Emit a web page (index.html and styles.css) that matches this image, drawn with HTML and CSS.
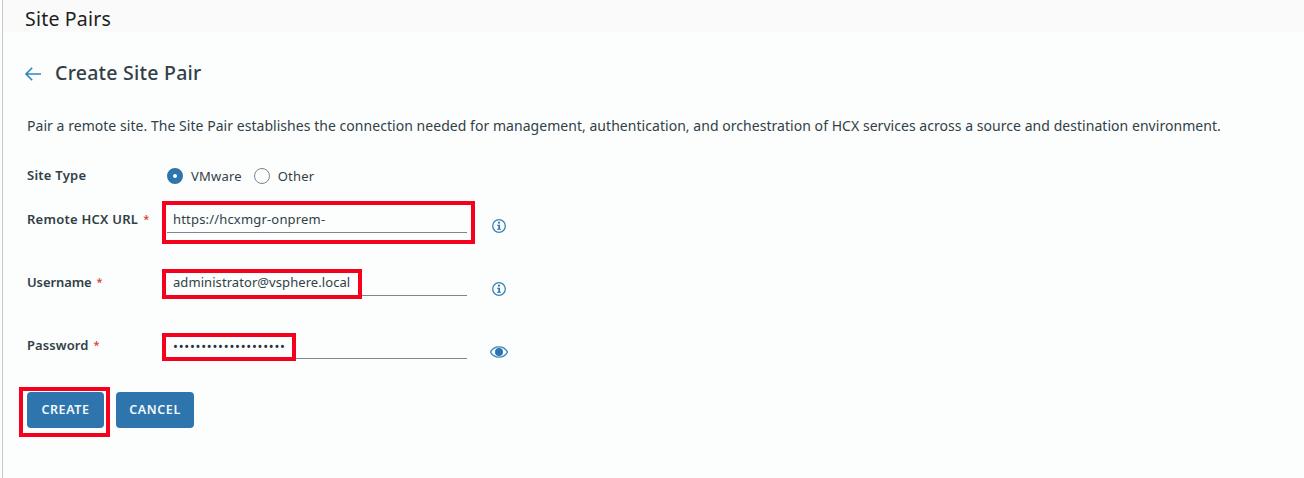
FILE: index.html
```html
<!DOCTYPE html>
<html lang="en">
<head>
<meta charset="utf-8">
<title>Site Pairs</title>
<link rel="stylesheet" href="styles.css">
</head>
<body>
<div class="page">
  <header class="topbar"><span class="topbar-title">Site Pairs</span></header>
  <main class="content">
    <div class="heading">
      <svg class="back" viewBox="0 0 18 16" width="18" height="16"><path d="M8.2 1.8 2 8l6.2 6.2M2 8h15"/></svg>
      <h1>Create Site Pair</h1>
    </div>
    <p class="intro">Pair a remote site. The Site Pair establishes the connection needed for management, authentication, and orchestration of HCX services across a source and destination environment.</p>
    <div class="type-row">
      <div class="label"><span class="l-type">Site Type</span></div>
      <span class="radio checked"></span><span class="radio-text t-vm">VMware</span>
      <span class="radio"></span><span class="radio-text t-other">Other</span>
    </div>
    <div class="row">
      <div class="label"><span class="l-url">Remote HCX URL</span><span class="req">*</span></div>
      <div class="field"><span class="v-url">https://hcxmgr-onprem-</span><i class="mark mark-url"></i></div>
      <svg class="icon" viewBox="0 0 18 18" width="18" height="18"><circle cx="9" cy="9" r="6.3"/><path class="fill" d="M8 4.8h2v1.8H8zM7 7.8h3v4h1v1H7v-1h1.3v-3H7z"/></svg>
    </div>
    <div class="row">
      <div class="label"><span class="l-user">Username</span><span class="req">*</span></div>
      <div class="field"><span class="v-user">administrator@vsphere.local</span><i class="mark mark-user"></i></div>
      <svg class="icon" viewBox="0 0 18 18" width="18" height="18"><circle cx="9" cy="9" r="6.3"/><path class="fill" d="M8 4.8h2v1.8H8zM7 7.8h3v4h1v1H7v-1h1.3v-3H7z"/></svg>
    </div>
    <div class="row">
      <div class="label"><span class="l-pass">Password</span><span class="req">*</span></div>
      <div class="field"><span class="v-pass">••••••••••••••••••••</span><i class="mark mark-pass"></i></div>
      <svg class="icon" viewBox="0 0 18 18" width="18" height="18"><path d="M.5 9C4.2 2.2 13.8 2.2 17.5 9 13.8 15.8 4.2 15.8.5 9z"/><circle class="fill" cx="9" cy="9" r="4"/></svg>
    </div>
    <div class="actions">
      <button class="btn btn-create"><span>CREATE</span><i class="mark mark-create"></i></button>
      <button class="btn btn-cancel"><span>CANCEL</span></button>
    </div>
  </main>
</div>
</body>
</html>
```
FILE: styles.css
```css
* { box-sizing: border-box; }
body { margin: 0; background: #fcfdfd; font-family: "Noto Sans", sans-serif; color: #313f47; }
.page { height: 478px; margin-left: 2px; border-left: 1px solid #c8c8c8; overflow: hidden; white-space: nowrap; }
.topbar { height: 32px; padding: 4px 0 0 22px; background: #fafafa; line-height: 30px; }
.topbar-title { font-size: 19.5px; color: #1d1d1d; letter-spacing: 0.2px; }
.content { padding: 26px 0 0 24px; }
.heading { display: flex; align-items: center; height: 32px; margin-left: -3px; }
.back { fill: none; stroke: #2f86bd; stroke-width: 1.6; }
h1 { margin: -2px 0 0 13px; font-size: 19.5px; font-weight: 500; line-height: 30px; letter-spacing: 0.25px; }
.intro { margin: 26px 0 0; height: 20px; font-size: 14px; line-height: 20px; letter-spacing: 0.042px; }
.type-row { display: flex; align-items: center; height: 20px; margin-top: 30px; }
.label { display: flex; width: 140px; font-size: 13px; font-weight: 600; line-height: 22px; }
.l-type { position: relative; top: -1px; letter-spacing: 0.25px; }
.l-url { letter-spacing: 0.25px; }
.l-user { letter-spacing: -0.1px; }
.l-pass { letter-spacing: 0.1px; }
.req { margin-left: 5px; color: #d93a2b; font-weight: 500; font-size: 11px; line-height: 21px; }
.radio { width: 16px; height: 16px; border: 1px solid #7b858b; border-radius: 50%; }
.radio.checked { border: 6px solid #2e75ae; background: #fff; }
.radio-text { margin: 0 12px 0 8px; font-size: 13px; line-height: 20px; letter-spacing: 0.2px; }
.row { display: flex; height: 63px; }
.type-row + .row { margin-top: 22px; }
.field { position: relative; width: 300px; height: 25px; padding-left: 6px; border-bottom: 1px solid #7b8790; font-size: 13px; line-height: 22px; }
.v-url { letter-spacing: 0.18px; }
.v-user { letter-spacing: 0.07px; }
.v-pass { position: relative; top: 1px; letter-spacing: 0.75px; color: #26323a; }
.icon { margin: 9px 0 0 23px; fill: none; stroke: #3684b8; stroke-width: 1.3; }
.fill { fill: #2e75ae; stroke: none; }
.mark { position: absolute; border: 4px solid #f5001d; pointer-events: none; }
.mark-url { left: -5px; top: -7px; width: 313px; height: 43px; }
.mark-user { left: -5px; top: -2px; width: 200px; height: 30px; }
.mark-pass { left: -5px; top: -1px; width: 134px; height: 28px; }
.mark-create { left: -8px; top: -5px; width: 91px; height: 50px; }
.actions { display: flex; gap: 12px; margin-top: -5px; }
.btn { position: relative; height: 36px; padding: 0; border: 0; border-radius: 4px; background: #2e75ae; color: #f4f9fc; font: 600 12.5px/36px "Noto Sans", sans-serif; letter-spacing: 0.6px; }
.btn-create { width: 77px; }
.btn-cancel { width: 78px; }
```
